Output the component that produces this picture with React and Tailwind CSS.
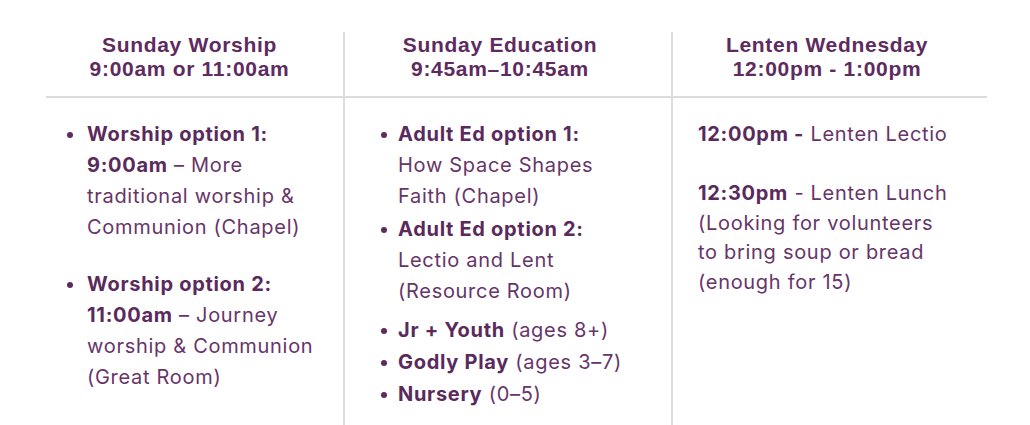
// App.jsx
const purple = "text-[#673569]";

const Bullet = ({ width, children }) => (
  <li className="flex">
    <div className={`${width} h-[31px] shrink-0 flex items-center`}>
      <span className="w-[6px] h-[6px] rounded-full bg-[#5e2b60]" />
    </div>
    <div>{children}</div>
  </li>
);

const B = ({ children }) => <b className="font-bold text-[#5a2a5c]">{children}</b>;

const Header = ({ title, time, shift }) => (
  <div
    className={`h-[66px] border-b-2 border-[#dcdcdc] flex flex-col items-center pt-[1px] text-[21px] leading-[24px] font-bold text-[#5e2b60] ${shift}`}
    style={{ fontFamily: '"Liberation Sans", Arial, sans-serif' }}
  >
    <div>{title}</div>
    <div>{time}</div>
  </div>
);

const App = () => {
  return (
    <div className="w-[1030px] h-[425px] bg-white overflow-hidden">
      <div
        className={`ml-[46px] mt-[32px] flex ${purple} text-[20px] leading-[31px] tracking-[0.7px]`}
        style={{ fontFamily: "Inter, 'Noto Sans', sans-serif" }}
      >
        {/* Sunday Worship */}
        <div className="w-[297px] flex flex-col">
          <Header title="Sunday Worship" time="9:00am or 11:00am" shift="pr-[10px]" />
          <ul className="pt-[21px] pl-[21px] flex flex-col gap-[26px]">
            <Bullet width="w-[20px]">
              <B>Worship option 1:</B>
              <br />
              <B>9:00am</B> – More
              <br />
              traditional worship &amp;
              <br />
              Communion (Chapel)
            </Bullet>
            <Bullet width="w-[20px]">
              <B>Worship option 2:</B>
              <br />
              <B>11:00am</B> – Journey
              <br />
              worship &amp; Communion
              <br />
              (Great Room)
            </Bullet>
          </ul>
        </div>

        {/* Sunday Education */}
        <div className="w-[330px] h-[393px] flex flex-col border-l-2 border-r-2 border-[#dcdcdc]">
          <Header title="Sunday Education" time="9:45am–10:45am" shift="pr-[16px]" />
          <ul className="pt-[21px] pl-[36px] flex flex-col">
            <Bullet width="w-[17px]">
              <B>Adult Ed option 1:</B>
              <br />
              How Space Shapes
              <br />
              Faith (Chapel)
            </Bullet>
            <div className="h-[2px]" />
            <Bullet width="w-[17px]">
              <B>Adult Ed option 2:</B>
              <br />
              Lectio and Lent
              <br />
              (Resource Room)
            </Bullet>
            <div className="h-[8px]" />
            <Bullet width="w-[17px]">
              <B>Jr + Youth</B> (ages 8+)
            </Bullet>
            <div className="h-[1px]" />
            <Bullet width="w-[17px]">
              <B>Godly Play</B> (ages 3–7)
            </Bullet>
            <div className="h-[1px]" />
            <Bullet width="w-[17px]">
              <B>Nursery</B> (0–5)
            </Bullet>
          </ul>
        </div>

        {/* Lenten Wednesday */}
        <div className="w-[314px] flex flex-col">
          <Header title="Lenten Wednesday" time="12:00pm - 1:00pm" shift="pr-[6px]" />
          <div className="pt-[22px] pl-[25px] leading-[29.5px]">
            <p>
              <B>12:00pm -</B> Lenten Lectio
            </p>
            <p className="mt-[29.5px]">
              <B>12:30pm</B> - Lenten Lunch
              <br />
              (Looking for volunteers
              <br />
              to bring soup or bread
              <br />
              (enough for 15)
            </p>
          </div>
        </div>
      </div>
    </div>
  );
};

export default App;
